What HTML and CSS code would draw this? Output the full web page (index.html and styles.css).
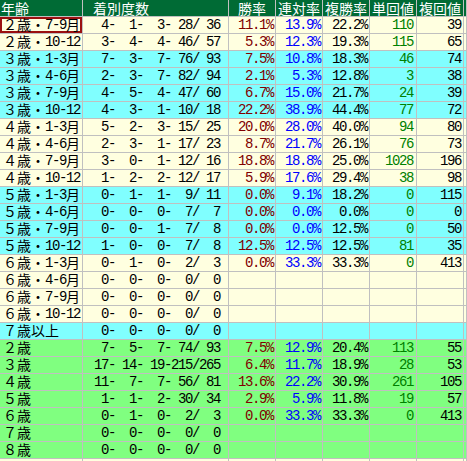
FILE: index.html
```html
<!DOCTYPE html>
<html lang="ja">
<head>
<meta charset="utf-8">
<title>年齢別成績</title>
<link rel="stylesheet" href="styles.css">
</head>
<body>
<table class="tbl">
  <colgroup>
    <col class="c-lab"><col class="c-rec"><col class="c-num"><col class="c-num"><col class="c-num"><col class="c-num"><col class="c-num"><col class="c-extra">
  </colgroup>
  <thead>
    <tr class="head">
      <th class="h-lab">年齢</th>
      <th class="h-rec">着別度数</th>
      <th>勝率</th>
      <th>連対率</th>
      <th>複勝率</th>
      <th>単回値</th>
      <th>複回値</th>
      <th></th>
    </tr>
  </thead>
  <tbody>
    <tr class="cream"><td class="lab sel"><span class="j">２歳・</span>7-9<span class="j">月</span></td><td class="rec">  4-  1-  3- 28/ 36</td><td class="win">11.1%</td><td class="ren">13.9%</td><td class="fuku">22.2%</td><td class="tan">110</td><td class="fk">39</td><td></td></tr>
    <tr class="cream"><td class="lab"><span class="j">２歳・</span>10-12</td><td class="rec">  3-  4-  4- 46/ 57</td><td class="win">5.3%</td><td class="ren">12.3%</td><td class="fuku">19.3%</td><td class="tan">115</td><td class="fk">65</td><td></td></tr>
    <tr class="cyan"><td class="lab"><span class="j">３歳・</span>1-3<span class="j">月</span></td><td class="rec">  7-  3-  7- 76/ 93</td><td class="win">7.5%</td><td class="ren">10.8%</td><td class="fuku">18.3%</td><td class="tan">46</td><td class="fk">74</td><td></td></tr>
    <tr class="cyan"><td class="lab"><span class="j">３歳・</span>4-6<span class="j">月</span></td><td class="rec">  2-  3-  7- 82/ 94</td><td class="win">2.1%</td><td class="ren">5.3%</td><td class="fuku">12.8%</td><td class="tan">3</td><td class="fk">38</td><td></td></tr>
    <tr class="cyan"><td class="lab"><span class="j">３歳・</span>7-9<span class="j">月</span></td><td class="rec">  4-  5-  4- 47/ 60</td><td class="win">6.7%</td><td class="ren">15.0%</td><td class="fuku">21.7%</td><td class="tan">24</td><td class="fk">39</td><td></td></tr>
    <tr class="cyan"><td class="lab"><span class="j">３歳・</span>10-12</td><td class="rec">  4-  3-  1- 10/ 18</td><td class="win">22.2%</td><td class="ren">38.9%</td><td class="fuku">44.4%</td><td class="tan">77</td><td class="fk">72</td><td></td></tr>
    <tr class="cream"><td class="lab"><span class="j">４歳・</span>1-3<span class="j">月</span></td><td class="rec">  5-  2-  3- 15/ 25</td><td class="win">20.0%</td><td class="ren">28.0%</td><td class="fuku">40.0%</td><td class="tan">94</td><td class="fk">80</td><td></td></tr>
    <tr class="cream"><td class="lab"><span class="j">４歳・</span>4-6<span class="j">月</span></td><td class="rec">  2-  3-  1- 17/ 23</td><td class="win">8.7%</td><td class="ren">21.7%</td><td class="fuku">26.1%</td><td class="tan">76</td><td class="fk">73</td><td></td></tr>
    <tr class="cream"><td class="lab"><span class="j">４歳・</span>7-9<span class="j">月</span></td><td class="rec">  3-  0-  1- 12/ 16</td><td class="win">18.8%</td><td class="ren">18.8%</td><td class="fuku">25.0%</td><td class="tan">1028</td><td class="fk">196</td><td></td></tr>
    <tr class="cream"><td class="lab"><span class="j">４歳・</span>10-12</td><td class="rec">  1-  2-  2- 12/ 17</td><td class="win">5.9%</td><td class="ren">17.6%</td><td class="fuku">29.4%</td><td class="tan">38</td><td class="fk">98</td><td></td></tr>
    <tr class="cyan"><td class="lab"><span class="j">５歳・</span>1-3<span class="j">月</span></td><td class="rec">  0-  1-  1-  9/ 11</td><td class="win">0.0%</td><td class="ren">9.1%</td><td class="fuku">18.2%</td><td class="tan">0</td><td class="fk">115</td><td></td></tr>
    <tr class="cyan"><td class="lab"><span class="j">５歳・</span>4-6<span class="j">月</span></td><td class="rec">  0-  0-  0-  7/  7</td><td class="win">0.0%</td><td class="ren">0.0%</td><td class="fuku">0.0%</td><td class="tan">0</td><td class="fk">0</td><td></td></tr>
    <tr class="cyan"><td class="lab"><span class="j">５歳・</span>7-9<span class="j">月</span></td><td class="rec">  0-  0-  1-  7/  8</td><td class="win">0.0%</td><td class="ren">0.0%</td><td class="fuku">12.5%</td><td class="tan">0</td><td class="fk">50</td><td></td></tr>
    <tr class="cyan"><td class="lab"><span class="j">５歳・</span>10-12</td><td class="rec">  1-  0-  0-  7/  8</td><td class="win">12.5%</td><td class="ren">12.5%</td><td class="fuku">12.5%</td><td class="tan">81</td><td class="fk">35</td><td></td></tr>
    <tr class="cream"><td class="lab"><span class="j">６歳・</span>1-3<span class="j">月</span></td><td class="rec">  0-  1-  0-  2/  3</td><td class="win">0.0%</td><td class="ren">33.3%</td><td class="fuku">33.3%</td><td class="tan">0</td><td class="fk">413</td><td></td></tr>
    <tr class="cream"><td class="lab"><span class="j">６歳・</span>4-6<span class="j">月</span></td><td class="rec">  0-  0-  0-  0/  0</td><td></td><td></td><td></td><td></td><td></td><td></td></tr>
    <tr class="cream"><td class="lab"><span class="j">６歳・</span>7-9<span class="j">月</span></td><td class="rec">  0-  0-  0-  0/  0</td><td></td><td></td><td></td><td></td><td></td><td></td></tr>
    <tr class="cream"><td class="lab"><span class="j">６歳・</span>10-12</td><td class="rec">  0-  0-  0-  0/  0</td><td></td><td></td><td></td><td></td><td></td><td></td></tr>
    <tr class="cyan"><td class="lab"><span class="j">７歳以上</span></td><td class="rec">  0-  0-  0-  0/  0</td><td></td><td></td><td></td><td></td><td></td><td></td></tr>
    <tr class="green"><td class="lab"><span class="j">２歳</span></td><td class="rec">  7-  5-  7- 74/ 93</td><td class="win">7.5%</td><td class="ren">12.9%</td><td class="fuku">20.4%</td><td class="tan">113</td><td class="fk">55</td><td></td></tr>
    <tr class="green"><td class="lab"><span class="j">３歳</span></td><td class="rec"> 17- 14- 19-215/265</td><td class="win">6.4%</td><td class="ren">11.7%</td><td class="fuku">18.9%</td><td class="tan">28</td><td class="fk">53</td><td></td></tr>
    <tr class="green"><td class="lab"><span class="j">４歳</span></td><td class="rec"> 11-  7-  7- 56/ 81</td><td class="win">13.6%</td><td class="ren">22.2%</td><td class="fuku">30.9%</td><td class="tan">261</td><td class="fk">105</td><td></td></tr>
    <tr class="green"><td class="lab"><span class="j">５歳</span></td><td class="rec">  1-  1-  2- 30/ 34</td><td class="win">2.9%</td><td class="ren">5.9%</td><td class="fuku">11.8%</td><td class="tan">19</td><td class="fk">57</td><td></td></tr>
    <tr class="green"><td class="lab"><span class="j">６歳</span></td><td class="rec">  0-  1-  0-  2/  3</td><td class="win">0.0%</td><td class="ren">33.3%</td><td class="fuku">33.3%</td><td class="tan">0</td><td class="fk">413</td><td></td></tr>
    <tr class="green"><td class="lab"><span class="j">７歳</span></td><td class="rec">  0-  0-  0-  0/  0</td><td></td><td></td><td></td><td></td><td></td><td></td></tr>
    <tr class="green"><td class="lab"><span class="j">８歳</span></td><td class="rec">  0-  0-  0-  0/  0</td><td></td><td></td><td></td><td></td><td></td><td></td></tr>
    <tr class="cream"><td class="lab"></td><td class="rec"></td><td></td><td></td><td></td><td></td><td></td><td></td></tr>
  </tbody>
</table>
</body>
</html>
```
FILE: styles.css
```css
html, body {
  margin: 0;
  padding: 0;
  background: #ffffff;
  overflow: hidden;
  width: 467px;
  height: 461px;
}

.tbl {
  border-collapse: separate;
  border-spacing: 0;
  table-layout: fixed;
  width: 467px;
  font-family: "Liberation Mono", "Noto Sans CJK JP", monospace;
  font-size: 14px;
  color: #000000;
}

.c-lab { width: 83px; }
.c-rec { width: 146px; }
.c-num { width: 47px; }
.c-extra { width: 3px; }

.tbl th,
.tbl td {
  box-sizing: border-box;
  padding: 0;
  border-right: 1px solid #c0c0c0;
  border-bottom: 1px solid #c0c0c0;
  height: 17px;
  white-space: pre;
}

.head th {
  background: #006b35;
  color: #ffffff;
  font-family: "Noto Sans CJK JP", sans-serif;
  font-weight: normal;
  font-size: 14px;
  line-height: 16px;
  text-align: center;
  letter-spacing: 0;
}

.head .h-lab { text-align: left; padding-left: 1px; }
.head .h-rec { text-align: left; padding-left: 10px; }

.tbl td {
  line-height: 15px;
  padding-top: 1px;
  letter-spacing: -1.4px;
  text-align: right;
  padding-right: 2px;
}

.cream td { background: #ffffe0; }
.cyan td { background: #80ffff; }
.green td { background: #80ff80; }

.tbl td.lab {
  text-align: left;
  padding-left: 3px;
  padding-right: 0;
}

.j {
  font-family: "Noto Sans CJK JP", sans-serif;
  letter-spacing: 0;
  line-height: 0;
  vertical-align: -1px;
}

.tbl td.rec { padding-right: 8px; }

.win { color: #800000; }
.ren { color: #0000ff; }
.fuku { color: #000000; }
.tan { color: #008000; }
.tbl td.tan { padding-right: 3px; }
.fk { color: #000000; }

.tbl td.sel {
  box-shadow: inset 0 0 0 2px #9b1010;
}
```
